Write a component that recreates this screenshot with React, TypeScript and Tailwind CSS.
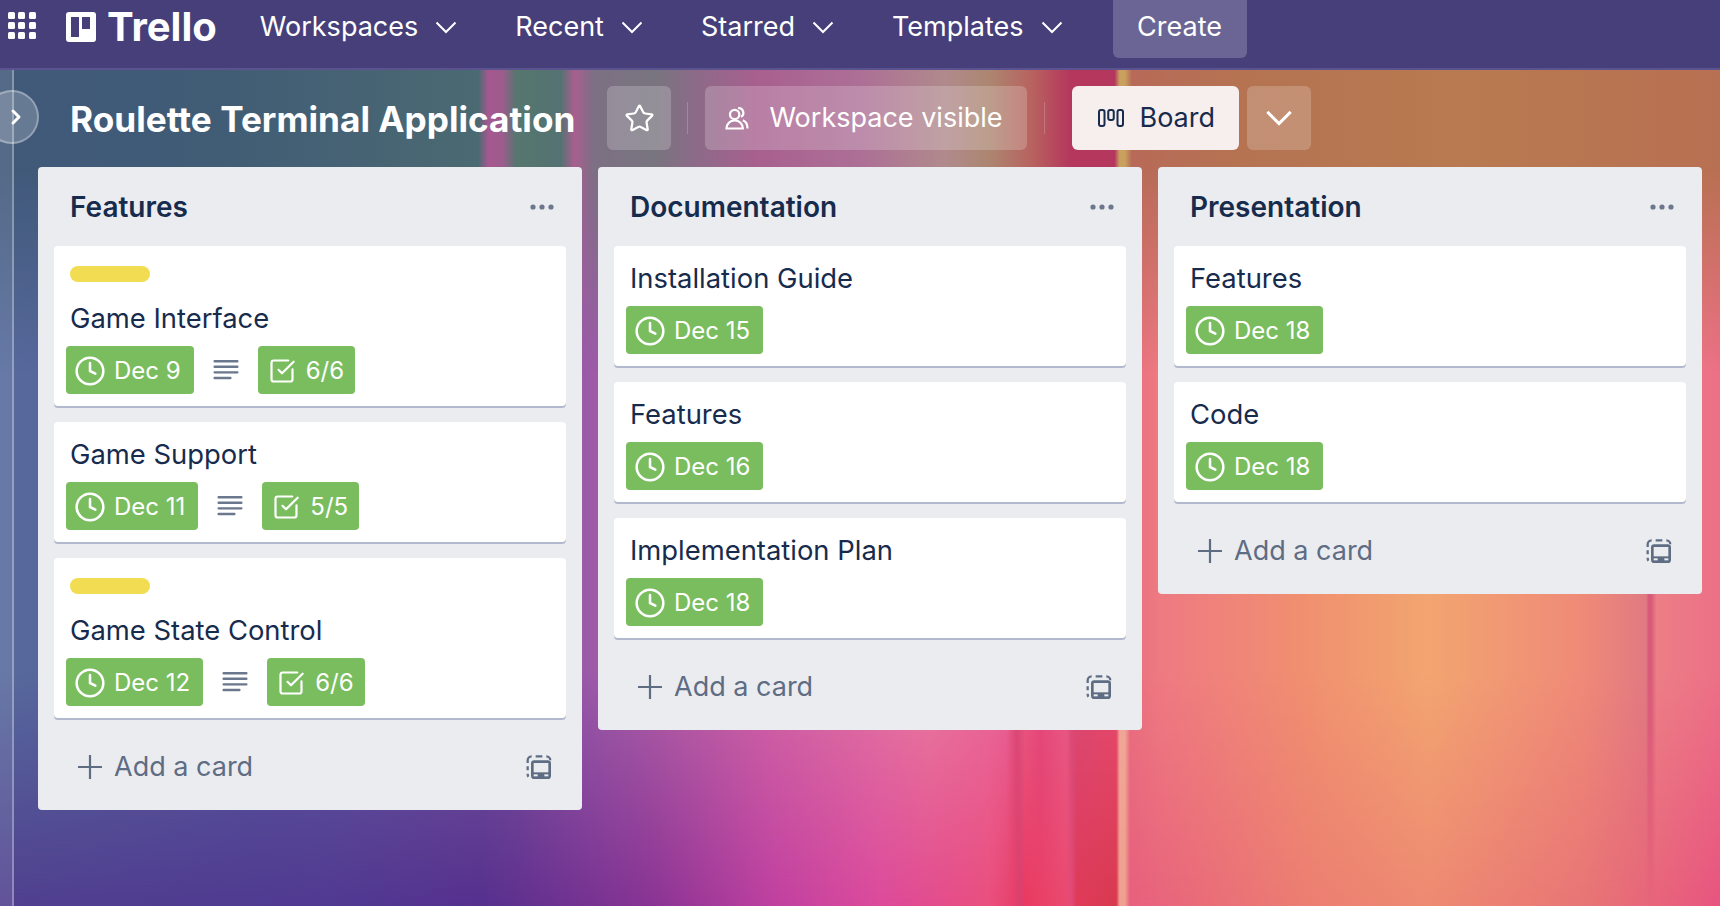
import { ChevronRight, Clock, SquareCheckBig, Star } from "lucide-react";

const fontStack = "font-['Inter','Noto_Sans',sans-serif]";

type CardData = {
  title: string;
  due: string;
  label?: boolean;
  checklist?: string;
};

type ListData = {
  title: string;
  cards: CardData[];
};

const lists: ListData[] = [
  {
    title: "Features",
    cards: [
      { title: "Game Interface", due: "Dec 9", label: true, checklist: "6/6" },
      { title: "Game Support", due: "Dec 11", checklist: "5/5" },
      { title: "Game State Control", due: "Dec 12", label: true, checklist: "6/6" },
    ],
  },
  {
    title: "Documentation",
    cards: [
      { title: "Installation Guide", due: "Dec 15" },
      { title: "Features", due: "Dec 16" },
      { title: "Implementation Plan", due: "Dec 18" },
    ],
  },
  {
    title: "Presentation",
    cards: [
      { title: "Features", due: "Dec 18" },
      { title: "Code", due: "Dec 18" },
    ],
  },
];

function Chevron({ className, width = 2 }: { className: string; width?: number }) {
  return (
    <svg viewBox="0 0 22 13" className={className} fill="none" stroke="currentColor" strokeWidth={width}>
      <path d="M1.5 1.5 11 11l9.5-9.5" />
    </svg>
  );
}

function DescriptionIcon() {
  return (
    <svg viewBox="0 0 26 22" className="h-[22px] w-[26px] text-[#6b778c]" fill="currentColor">
      <rect x="0.5" y="1" width="25" height="2.4" rx="1" />
      <rect x="0.5" y="6.6" width="25" height="2.4" rx="1" />
      <rect x="0.5" y="12.2" width="25" height="2.4" rx="1" />
      <rect x="0.5" y="17.8" width="18" height="2.4" rx="1" />
    </svg>
  );
}

function TemplateIcon() {
  return (
    <svg viewBox="0 0 24 24" className="size-[32px] text-[#5e6c84]" fill="none">
      <path d="M3.5 9V7A3 3 0 0 1 6.5 4M9.5 4h5M17.5 4a3 3 0 0 1 3 3M3.5 11.5v3M3.5 17v.5a3 3 0 0 0 .6 1.8" stroke="currentColor" strokeWidth="1.7" />
      <rect x="6" y="7" width="15" height="14" rx="2.5" fill="currentColor" />
      <rect x="8" y="9" width="11" height="7" fill="#ebecf0" />
      <rect x="8" y="17.5" width="3" height="1.5" fill="#ebecf0" />
      <rect x="16" y="17.5" width="3" height="1.5" fill="#ebecf0" />
    </svg>
  );
}

function Card({ card }: { card: CardData }) {
  return (
    <div className="rounded-[4px] bg-white px-[16px] pt-[16px] pb-[12px] shadow-[0_2px_0_#b3b9cc]">
      {card.label && <div className="mb-[20px] mt-[4px] h-[16px] w-[80px] rounded-full bg-[#f2dd52]" />}
      <div className="text-[27.4px] leading-[32px] text-[#172b4d]">{card.title}</div>
      <div className="-ml-[4px] mt-[12px] flex items-center gap-[19px]">
        <div className="flex h-[48px] items-center gap-[8px] rounded-[4px] bg-[#7abd5f] pl-[8px] pr-[13px] pt-[2px] text-[24px] text-white">
          <Clock className="size-[32px]" strokeWidth={1.9} />
          {card.due}
        </div>
        {card.checklist && (
          <>
            <DescriptionIcon />
            <div className="flex h-[48px] items-center gap-[10px] rounded-[4px] bg-[#7abd5f] pl-[10px] pr-[11px] pt-[2px] text-[24px] text-white">
              <SquareCheckBig className="size-[28px]" strokeWidth={1.9} />
              {card.checklist}
            </div>
          </>
        )}
      </div>
    </div>
  );
}

function List({ list }: { list: ListData }) {
  return (
    <div className="w-[544px] rounded-[4px] bg-[#ebecf0] px-[16px]">
      <div className="flex h-[79px] items-center justify-between pl-[16px] pr-[12px] pt-[1px]">
        <h2 className="text-[28px] font-semibold text-[#172b4d]">{list.title}</h2>
        <svg viewBox="0 0 24 6" className="h-[6px] w-[24px] text-[#6b778c]" fill="currentColor">
          <circle cx="3" cy="3" r="2.6" />
          <circle cx="12" cy="3" r="2.6" />
          <circle cx="21" cy="3" r="2.6" />
        </svg>
      </div>
      <div className="flex flex-col gap-[16px]">
        {list.cards.map((card) => (
          <Card key={card.title} card={card} />
        ))}
      </div>
      <div className="flex h-[92px] items-center justify-between pl-[23px] pr-[11px] pt-[6px] text-[27px] text-[#5e6c84]">
        <div className="flex items-center gap-[11px]">
          <svg viewBox="0 0 26 26" className="size-[26px]" stroke="currentColor" strokeWidth="2.2">
            <path d="M13 1v24M1 13h24" />
          </svg>
          Add a card
        </div>
        <TemplateIcon />
      </div>
    </div>
  );
}

export default function App() {
  return (
    <div className={`flex h-[906px] w-[1720px] flex-col overflow-hidden ${fontStack}`}>
      <header className="flex h-[70px] shrink-0 items-start border-b-2 border-[#5b5290] bg-[#463f79] pl-[8px] text-[27px] text-white">
        <div className="grid size-[28px] grid-cols-3 gap-[3px] pt-[12px]">
          {Array.from({ length: 9 }).map((_, i) => (
            <span key={i} className="size-[7px] rounded-[1.5px] bg-white" />
          ))}
        </div>
        <div className="ml-[30px] mt-[12px] flex items-center gap-[11px]">
          <span className="flex h-[30px] w-[30px] gap-[3px] rounded-[3px] bg-white p-[5px]">
            <span className="h-[20px] w-[8px] bg-[#463f79]" />
            <span className="h-[12px] w-[8px] bg-[#463f79]" />
          </span>
          <span className="text-[40px] font-bold leading-[30px]">Trello</span>
        </div>
        <nav className="ml-[43px] flex h-[55px] items-center gap-[58px]">
          {["Workspaces", "Recent", "Starred", "Templates"].map((item) => (
            <span key={item} className="flex items-center gap-[17px]">
              {item}
              <Chevron className="h-[13px] w-[22px]" />
            </span>
          ))}
          <span className="-ml-[8px] flex h-[61px] w-[134px] items-center justify-center rounded-b-[6px] bg-[#6a6595]">Create</span>
        </nav>
      </header>

      <main className="relative flex-1">
        {/* wallpaper: three colour bands that fade into each other going down */}
        <div className="absolute inset-0 bg-[linear-gradient(90deg,#50408f_0%,#503a92_19%,#56308e_28%,#8a3494_38%,#c040a0_45%,#dc4a9c_51%,#ea4f7e_57.5%,#e8406a_59%,#d84070_59.3%,#ea3a60_59.6%,#ea4a70_62%,#e04a78_62.3%,#e03a58_62.6%,#d83a50_64.9%,#f0a090_65.1%,#f0a090_65.4%,#e8607e_65.7%,#ec7e72_76%,#ee8a72_83%,#e87476_92.5%,#e85580_100%)]" />
        <div className="absolute inset-0 bg-[linear-gradient(90deg,#566a9c_0%,#5a5a9c_15%,#7a559c_30%,#9a5aa8_34%,#d065a5_44.6%,#e87aa0_54%,#e8659a_58.5%,#d84a78_59.1%,#e85a88_59.6%,#e04a80_60.5%,#e85a88_62%,#d84a78_62.3%,#e84a70_64.9%,#f0a898_65.1%,#f0a898_65.4%,#e8707e_65.7%,#ee7a82_67.5%,#f0906f_76%,#f2a570_83%,#ef8a78_92%,#e07a82_95.7%,#d85a7a_95.85%,#d85a7a_96%,#ec7e86_96.3%,#ec7086_100%)] [mask-image:linear-gradient(180deg,#000_0%,#000_72%,transparent_100%)]" />
        <div className="absolute inset-0 bg-[linear-gradient(90deg,#41597a_0%,#3f5b76_10%,#466274_20%,#4a6a72_27.8%,#a5588f_28.4%,#9d5c8d_29.2%,#56766f_30%,#537272_32.6%,#a85f90_33.4%,#7d6f84_34.5%,#78757f_38%,#8d6a88_40.5%,#a8608f_44%,#ad6f96_50%,#b08a8c_55%,#ac8670_57.5%,#b8625f_60%,#b5375d_62.2%,#b5375d_64.8%,#c9a15f_65.1%,#c9a15f_65.4%,#b86a58_65.8%,#b57352_72%,#b87a50_85%,#b87052_100%)] [mask-image:linear-gradient(180deg,#000_0%,#000_12%,transparent_36%)]" />
        <div className="absolute inset-y-0 left-0 w-[14px] border-r-2 border-white/30 bg-white/10" />
        <button className="absolute -left-[15px] top-[20px] flex size-[54px] items-center justify-center rounded-full border-2 border-white/30 bg-white/20 pl-[8px] text-white">
          <ChevronRight className="size-[24px]" strokeWidth={3} />
        </button>

        <div className="relative pl-[38px]">
          <div className="flex h-[97px] items-center pb-[1px]">
            <h1 className="ml-[32px] mt-[3px] text-[35.2px] font-bold text-white">Roulette Terminal Application</h1>
            <div className="ml-[32px] flex size-[64px] items-center justify-center rounded-[6px] bg-white/20 text-white">
              <Star className="size-[31px]" strokeWidth={1.75} />
            </div>
            <div className="ml-[16px] mr-[17px] h-[32px] w-px bg-white/20" />
            <div className="flex h-[64px] items-center gap-[18px] rounded-[6px] bg-white/20 pl-[18px] pr-[24px] text-[27px] text-white">
              <svg viewBox="0 0 24 24" className="size-[28px]" fill="none" stroke="currentColor" strokeWidth="1.9">
                <circle cx="10" cy="9" r="4" />
                <path d="M3 21c0-4 3-7 7-7s7 3 7 7zM13 3.6a4 4 0 0 1 2.5 7.4M17 14c2.5 1 4 3.5 4 7" />
              </svg>
              Workspace visible
            </div>
            <div className="ml-[17px] mr-[27px] h-[32px] w-px bg-white/20" />
            <div className="flex h-[64px] items-center gap-[16px] rounded-[6px] bg-[#f7eeee] pl-[26px] pr-[24px] text-[27px] text-[#172b4d]">
              <svg viewBox="0 0 26 18" className="h-[18px] w-[26px]" fill="none" stroke="currentColor" strokeWidth="2">
                <rect x="1" y="1" width="5.5" height="16" rx="2" />
                <rect x="10.25" y="1" width="5.5" height="10" rx="2" />
                <rect x="19.5" y="1" width="5.5" height="16" rx="2" />
              </svg>
              Board
            </div>
            <div className="ml-[8px] flex size-[64px] items-center justify-center rounded-[6px] bg-white/20 text-white">
              <Chevron className="h-[16px] w-[28px]" width={2.4} />
            </div>
          </div>
          <div className="flex items-start gap-[16px]">
            {lists.map((list) => (
              <List key={list.title} list={list} />
            ))}
          </div>
        </div>
      </main>
    </div>
  );
}
